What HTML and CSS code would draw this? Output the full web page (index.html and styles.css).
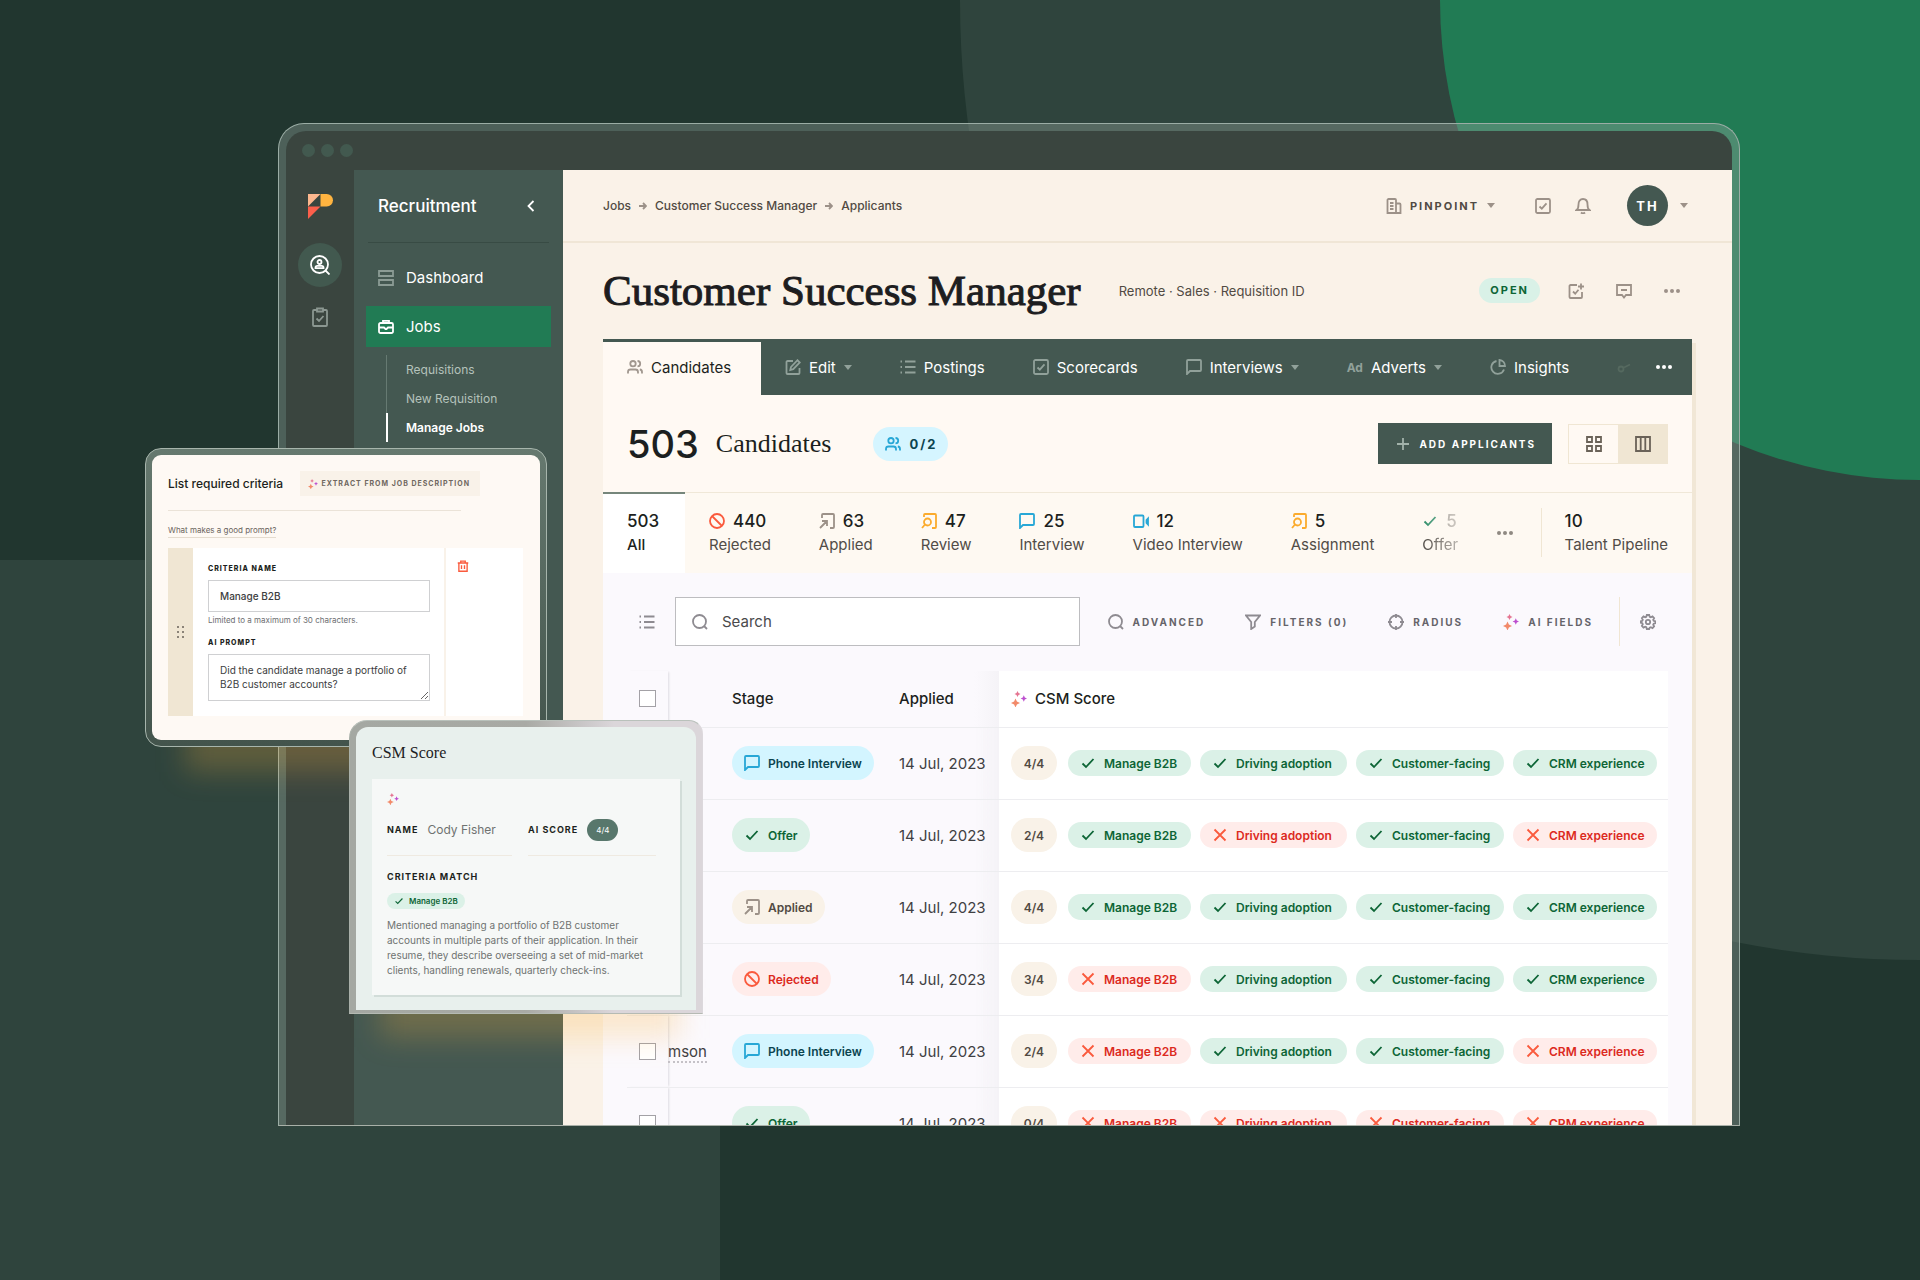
FILE: index.html
```html
<!DOCTYPE html>
<html lang="en">
<head>
<meta charset="utf-8">
<title>Customer Success Manager – Applicants</title>
<link rel="stylesheet" href="styles.css">
</head>
<body>
<svg class="sprite" aria-hidden="true">
  <defs>
    <symbol id="i-users" viewBox="0 0 16 16"><circle cx="6" cy="4.7" r="2.7"/><path d="M1 14.500v-1.500a2.500 2.500 0 0 1 2.500-2.500h5a2.500 2.500 0 0 1 2.500 2.500v1.500M10.500 2a2.700 2.700 0 0 1 0 5.400M12.800 10.500a2.500 2.500 0 0 1 2.200 2.500v1.500"/></symbol>
    <symbol id="i-edit" viewBox="0 0 16 16"><path d="M8 2H2.500a1 1 0 0 0-1 1v11a1 1 0 0 0 1 1h11a1 1 0 0 0 1-1V9M6 8l6.500-6.800 2.300 2.300L8.200 10.200 5.300 11z"/></symbol>
    <symbol id="i-list" viewBox="0 0 16 16"><path d="M5 2.500h10.500M5 8h10.500M5 13.500h10.500M.5 2.500h1.500M.5 8h1.500M.5 13.500h1.500"/></symbol>
    <symbol id="i-check-box" viewBox="0 0 16 16"><rect x="1" y="1" width="14" height="14" rx="1.500"/><path d="m4.500 8.500 2.300 2.200 4.700-5.400"/></symbol>
    <symbol id="i-chat" viewBox="0 0 16 16"><path d="M1 15V2a1 1 0 0 1 1-1h12a1 1 0 0 1 1 1v9a1 1 0 0 1-1 1H4z"/></symbol>
    <symbol id="i-pie" viewBox="0 0 16 16"><path d="M6.500 2A6.500 6.500 0 1 0 14 10.500M9.500 1v6H15A6 6 0 0 0 9.500 1z"/></symbol>
    <symbol id="i-dots" viewBox="0 0 16 16"><g fill="currentColor" stroke="none"><circle cx="2" cy="8" r="2"/><circle cx="8" cy="8" r="2"/><circle cx="14" cy="8" r="2"/></g></symbol>
    <symbol id="i-caret" viewBox="0 0 8 5"><path d="M0 0h8L4 5z" fill="currentColor" stroke="none"/></symbol>
    <symbol id="i-ban" viewBox="0 0 16 16"><circle cx="8" cy="8" r="7"/><path d="m3 3 10 10"/></symbol>
    <symbol id="i-applied" viewBox="0 0 16 16"><path d="M3 5V2a1 1 0 0 1 1-1h10a1 1 0 0 1 1 1v12a1 1 0 0 1-1 1h-3M1 15l7-7M3 8h5v5"/></symbol>
    <symbol id="i-review" viewBox="0 0 16 16"><path d="M3 4V2a1 1 0 0 1 1-1h10a1 1 0 0 1 1 1v12a1 1 0 0 1-1 1h-3"/><circle cx="6.500" cy="9" r="3.500"/><path d="m4 11.500-3 3.500"/></symbol>
    <symbol id="i-video" viewBox="0 0 16 16"><rect x="1" y="2.500" width="9.500" height="11.500" rx="1"/><path d="M13.500 7v3l1.500 1.500V5.500z"/></symbol>
    <symbol id="i-check" viewBox="0 0 16 16"><path d="m2.500 8.500 3.500 3.500 7.500-8"/></symbol>
    <symbol id="i-x" viewBox="0 0 16 16"><path d="m2.500 2.500 11 11M13.500 2.500l-11 11"/></symbol>
    <symbol id="i-search" viewBox="0 0 16 16"><circle cx="7.500" cy="7.500" r="6.500"/><path d="m12 12 3 3"/></symbol>
    <symbol id="i-filter" viewBox="0 0 16 16"><path d="M1 1.500h14L9.800 8v4.500L6.200 15V8z"/></symbol>
    <symbol id="i-radius" viewBox="0 0 16 16"><circle cx="8" cy="8" r="6.500"/><path d="M8 0v4M8 12v4M0 8h4M12 8h4"/></symbol>
    <symbol id="i-spark" viewBox="0 0 16 16"><g stroke="none"><path d="M4.500 7.500 5.900 10.600 9 12 5.900 13.400 4.500 16.500 3.100 13.400 0 12 3.100 10.600z" fill="#f28a6a"/><path d="m6.500 0 1 2 2 1-2 1-1 2-1-2-2-1 2-1z" fill="#e57491"/><path d="m12.800 4.200 1 2.300 2.200 1-2.200 1-1 2.300-1-2.300-2.200-1 2.200-1z" fill="#bd4fcf"/></g></symbol>
    <symbol id="i-gear" viewBox="0 0 16 16"><path d="M6.800 1h2.400l.5 1.800 1.100.5 1.700-.9 1.600 1.700-.9 1.600.5 1.100 1.800.5v1.900l-1.800.5-.5 1.100.9 1.600-1.600 1.700-1.700-.9-1.100.5L9.200 15H6.800l-.5-1.800-1.100-.5-1.700.9-1.600-1.700.9-1.600-.5-1.100L.7 8.700V7.300l1.600-.5.5-1.100-.9-1.600 1.600-1.700 1.700.9 1.100-.5z"/><circle cx="8" cy="8" r="2.200"/></symbol>
    <symbol id="i-building" viewBox="0 0 16 16"><path d="M1.500 15V2a1 1 0 0 1 1-1H9a1 1 0 0 1 1 1v13zM10 5.500h3.500a1 1 0 0 1 1 1V15H10M4 5h3.500M4 8h3.500M4 11h3.500"/></symbol>
    <symbol id="i-bell" viewBox="0 0 16 16"><path d="M1.500 12c1.500-1 2-2 2-5.500C3.500 3.500 5 1 8 1s4.500 2.500 4.500 5.500c0 3.500.5 4.500 2 5.500zM6 14.500c1 1 3 1 4 0"/></symbol>
    <symbol id="i-task-plus" viewBox="0 0 16 16"><path d="M9 2H2.500a1 1 0 0 0-1 1v11a1 1 0 0 0 1 1H13a1 1 0 0 0 1-1V9M13 .5v6M10 3.500h6M5 8.500l2.200 2.200 3.300-4"/></symbol>
    <symbol id="i-comment" viewBox="0 0 16 16"><path d="M1 2h14v10h-5l-2 2.500L6 12H1zM5 7h6"/></symbol>
    <symbol id="i-grid" viewBox="0 0 16 16"><path d="M1 1h5v5H1zM10 1h5v5h-5zM1 10h5v5H1zM10 10h5v5h-5z"/></symbol>
    <symbol id="i-cols" viewBox="0 0 16 16"><path d="M1 1h14v14H1zM5.700 1v14M10.300 1v14"/></symbol>
    <symbol id="i-plus" viewBox="0 0 16 16"><path d="M8 2v12M2 8h12"/></symbol>
    <symbol id="i-chevron" viewBox="0 0 16 16"><path d="M10.500 3 5.500 8l5 5"/></symbol>
    <symbol id="i-dash" viewBox="0 0 16 16"><path d="M1 1h14v5H1zM1 10h14v5H1z"/></symbol>
    <symbol id="i-case" viewBox="0 0 16 16"><path d="M5 4V1.800h6V4M2.500 4h11A1.500 1.500 0 0 1 15 5.500v7a1.500 1.500 0 0 1-1.500 1.500h-11A1.500 1.500 0 0 1 1 12.500v-7A1.500 1.500 0 0 1 2.500 4zM1 8.500h5l1.500 1.500h1L10 8.500h5"/></symbol>
    <symbol id="i-person-search" viewBox="0 0 20 20"><circle cx="9.500" cy="9.500" r="8.500"/><circle cx="9.500" cy="7" r="2"/><path d="M5.500 13.200v-.6c0-1 .8-1.800 1.800-1.800h4.400c1 0 1.800.8 1.800 1.800v.6zM15.500 15.500l4 4"/></symbol>
    <symbol id="i-clipboard" viewBox="0 0 16 20"><path d="M5 3H2a1 1 0 0 0-1 1v14a1 1 0 0 0 1 1h12a1 1 0 0 0 1-1V4a1 1 0 0 0-1-1h-3M5 1.500h6v3H5zM4.500 11.500 7 14l4.500-5"/></symbol>
    <symbol id="i-arrow" viewBox="0 0 8 8"><path d="M0 4h7M4 1l3 3-3 3"/></symbol>
    <symbol id="i-trash" viewBox="0 0 16 16"><path d="M1 4h14M5 4V1.500h6V4M2.500 4v11h11V4M6 7v5M10 7v5"/></symbol>
    <symbol id="i-share" viewBox="0 0 16 16"><circle cx="4" cy="8" r="2.500"/><path d="m7 6.500 6-3"/></symbol>
  </defs>
</svg>

<div class="desktop">
  <div class="shape shape-large"></div>
  <div class="shape shape-green"></div>
  <div class="shape shape-block"></div>

  <div class="window">
    <div class="titlebar"><i></i><i></i><i></i></div>
    <div class="app">
      <nav class="rail" aria-label="Products">
        <svg class="logo" viewBox="0 0 25 25"><path d="M0 0h12.500L0 12.500z" fill="#fdb78e"/><path d="M12.500 0h6.200a6.200 6.200 0 0 1 0 12.500H12.500z" fill="#ffb440"/><path d="M0 12.500h12.500L0 25z" fill="#fb5f4b"/></svg>
        <a href="#" class="rail-active" aria-label="Recruitment"><svg class="icon i20"><use href="#i-person-search"/></svg></a>
        <a href="#" class="rail-item" aria-label="Tasks"><svg class="icon clip"><use href="#i-clipboard"/></svg></a>
      </nav>
      <aside class="sidebar">
        <div class="side-head"><span>Recruitment</span><button aria-label="Collapse"><svg class="icon"><use href="#i-chevron"/></svg></button></div>
        <a href="#" class="side-link"><svg class="icon dim"><use href="#i-dash"/></svg>Dashboard</a>
        <a href="#" class="side-link current"><svg class="icon"><use href="#i-case"/></svg>Jobs</a>
        <div class="subnav">
          <a href="#">Requisitions</a>
          <a href="#">New Requisition</a>
          <a href="#" class="on">Manage Jobs</a>
        </div>
      </aside>
      <main class="main">
        <header class="topbar">
          <nav class="crumbs"><a href="#">Jobs</a><svg class="icon i8"><use href="#i-arrow"/></svg><a href="#">Customer Success Manager</a><svg class="icon i8"><use href="#i-arrow"/></svg><a href="#">Applicants</a></nav>
          <button class="company"><svg class="icon"><use href="#i-building"/></svg>PINPOINT<svg class="caret"><use href="#i-caret"/></svg></button>
          <button class="top-icon" aria-label="Tasks"><svg class="icon"><use href="#i-check-box"/></svg></button>
          <button class="top-icon bell" aria-label="Notifications"><svg class="icon"><use href="#i-bell"/></svg></button>
          <button class="account"><span class="avatar">TH</span><svg class="caret"><use href="#i-caret"/></svg></button>
        </header>
        <div class="title-row">
          <h1>Customer Success Manager</h1>
          <span class="meta">Remote · Sales · Requisition ID</span>
          <span class="open">OPEN</span>
          <button aria-label="Add task"><svg class="icon"><use href="#i-task-plus"/></svg></button>
          <button aria-label="Comments"><svg class="icon"><use href="#i-comment"/></svg></button>
          <button aria-label="More"><svg class="icon"><use href="#i-dots"/></svg></button>
        </div>
        <section class="panel">
          <nav class="tabs">
            <a href="#" class="tab active"><svg class="icon"><use href="#i-users"/></svg>Candidates</a>
            <a href="#" class="tab"><svg class="icon"><use href="#i-edit"/></svg>Edit<svg class="caret"><use href="#i-caret"/></svg></a>
            <a href="#" class="tab"><svg class="icon"><use href="#i-list"/></svg>Postings</a>
            <a href="#" class="tab"><svg class="icon"><use href="#i-check-box"/></svg>Scorecards</a>
            <a href="#" class="tab"><svg class="icon"><use href="#i-chat"/></svg>Interviews<svg class="caret"><use href="#i-caret"/></svg></a>
            <a href="#" class="tab"><b class="ad">Ad</b>Adverts<svg class="caret"><use href="#i-caret"/></svg></a>
            <a href="#" class="tab"><svg class="icon"><use href="#i-pie"/></svg>Insights</a>
            <span class="tab-fade"><svg class="icon"><use href="#i-share"/></svg></span>
            <button class="tab-more" aria-label="More tabs"><svg class="icon"><use href="#i-dots"/></svg></button>
          </nav>
          <div class="count-row">
            <span class="count">503</span>
            <h2>Candidates</h2>
            <span class="viewers"><svg class="icon"><use href="#i-users"/></svg>0/2</span>
            <button class="add"><svg class="icon"><use href="#i-plus"/></svg>ADD APPLICANTS</button>
            <div class="toggle"><button aria-label="Grid view"><svg class="icon"><use href="#i-grid"/></svg></button><button class="on" aria-label="Column view"><svg class="icon"><use href="#i-cols"/></svg></button></div>
          </div>
          <div class="stages">
            <a href="#" class="stage all"><b>503</b><span>All</span></a>
            <a href="#" class="stage"><b><svg class="icon red"><use href="#i-ban"/></svg>440</b><span>Rejected</span></a>
            <a href="#" class="stage"><b><svg class="icon gray"><use href="#i-applied"/></svg>63</b><span>Applied</span></a>
            <a href="#" class="stage"><b><svg class="icon amber"><use href="#i-review"/></svg>47</b><span>Review</span></a>
            <a href="#" class="stage"><b><svg class="icon blue"><use href="#i-chat"/></svg>25</b><span>Interview</span></a>
            <a href="#" class="stage"><b><svg class="icon blue"><use href="#i-video"/></svg>12</b><span>Video Interview</span></a>
            <a href="#" class="stage"><b><svg class="icon amber"><use href="#i-review"/></svg>5</b><span>Assignment</span></a>
            <a href="#" class="stage faded"><b><svg class="icon green"><use href="#i-check"/></svg>5</b><span>Offer</span></a>
            <button class="stage-more" aria-label="More stages"><svg class="icon"><use href="#i-dots"/></svg></button>
            <a href="#" class="stage pipeline"><b>10</b><span>Talent Pipeline</span></a>
          </div>
          <div class="list">
            <div class="toolbar">
              <button class="list-btn" aria-label="List options"><svg class="icon"><use href="#i-list"/></svg></button>
              <label class="search"><svg class="icon"><use href="#i-search"/></svg><input type="text" placeholder="Search" aria-label="Search"></label>
              <button class="tool"><svg class="icon"><use href="#i-search"/></svg>ADVANCED</button>
              <button class="tool"><svg class="icon"><use href="#i-filter"/></svg>FILTERS (0)</button>
              <button class="tool"><svg class="icon"><use href="#i-radius"/></svg>RADIUS</button>
              <button class="tool"><svg class="icon"><use href="#i-spark"/></svg>AI FIELDS</button>
              <button class="settings" aria-label="Settings"><svg class="icon"><use href="#i-gear"/></svg></button>
            </div>
            <table>
              <colgroup><col class="c-check"><col class="c-name"><col class="c-stage"><col class="c-date"><col></colgroup>
              <thead>
                <tr><th class="check"><input type="checkbox" aria-label="Select all"></th><th class="name"></th><th>Stage</th><th class="date">Applied</th><th class="score"><span><svg class="icon"><use href="#i-spark"/></svg>CSM Score</span></th></tr>
              </thead>
              <tbody>
                <tr><td class="check"><input type="checkbox" aria-label="Select row 1"></td><td class="name"></td><td><span class="pill p-blue"><svg class="icon"><use href="#i-chat"/></svg>Phone Interview</span></td><td class="date">14 Jul, 2023</td>
                  <td class="score"><div><span class="num">4/4</span><span class="chip yes"><svg class="icon"><use href="#i-check"/></svg>Manage B2B</span><span class="chip yes"><svg class="icon"><use href="#i-check"/></svg>Driving adoption</span><span class="chip yes"><svg class="icon"><use href="#i-check"/></svg>Customer-facing</span><span class="chip yes"><svg class="icon"><use href="#i-check"/></svg>CRM experience</span></div></td></tr>
                <tr><td class="check"><input type="checkbox" aria-label="Select row 2"></td><td class="name"></td><td><span class="pill p-green"><svg class="icon"><use href="#i-check"/></svg>Offer</span></td><td class="date">14 Jul, 2023</td>
                  <td class="score"><div><span class="num">2/4</span><span class="chip yes"><svg class="icon"><use href="#i-check"/></svg>Manage B2B</span><span class="chip no"><svg class="icon"><use href="#i-x"/></svg>Driving adoption</span><span class="chip yes"><svg class="icon"><use href="#i-check"/></svg>Customer-facing</span><span class="chip no"><svg class="icon"><use href="#i-x"/></svg>CRM experience</span></div></td></tr>
                <tr><td class="check"><input type="checkbox" aria-label="Select row 3"></td><td class="name"></td><td><span class="pill p-tan"><svg class="icon"><use href="#i-applied"/></svg>Applied</span></td><td class="date">14 Jul, 2023</td>
                  <td class="score"><div><span class="num">4/4</span><span class="chip yes"><svg class="icon"><use href="#i-check"/></svg>Manage B2B</span><span class="chip yes"><svg class="icon"><use href="#i-check"/></svg>Driving adoption</span><span class="chip yes"><svg class="icon"><use href="#i-check"/></svg>Customer-facing</span><span class="chip yes"><svg class="icon"><use href="#i-check"/></svg>CRM experience</span></div></td></tr>
                <tr><td class="check"><input type="checkbox" aria-label="Select row 4"></td><td class="name"></td><td><span class="pill p-red"><svg class="icon"><use href="#i-ban"/></svg>Rejected</span></td><td class="date">14 Jul, 2023</td>
                  <td class="score"><div><span class="num">3/4</span><span class="chip no"><svg class="icon"><use href="#i-x"/></svg>Manage B2B</span><span class="chip yes"><svg class="icon"><use href="#i-check"/></svg>Driving adoption</span><span class="chip yes"><svg class="icon"><use href="#i-check"/></svg>Customer-facing</span><span class="chip yes"><svg class="icon"><use href="#i-check"/></svg>CRM experience</span></div></td></tr>
                <tr><td class="check"><input type="checkbox" aria-label="Select row 5"></td><td class="name"><a href="#">mson</a></td><td><span class="pill p-blue"><svg class="icon"><use href="#i-chat"/></svg>Phone Interview</span></td><td class="date">14 Jul, 2023</td>
                  <td class="score"><div><span class="num">2/4</span><span class="chip no"><svg class="icon"><use href="#i-x"/></svg>Manage B2B</span><span class="chip yes"><svg class="icon"><use href="#i-check"/></svg>Driving adoption</span><span class="chip yes"><svg class="icon"><use href="#i-check"/></svg>Customer-facing</span><span class="chip no"><svg class="icon"><use href="#i-x"/></svg>CRM experience</span></div></td></tr>
                <tr><td class="check"><input type="checkbox" aria-label="Select row 6"></td><td class="name"></td><td><span class="pill p-green"><svg class="icon"><use href="#i-check"/></svg>Offer</span></td><td class="date">14 Jul, 2023</td>
                  <td class="score"><div><span class="num">0/4</span><span class="chip no"><svg class="icon"><use href="#i-x"/></svg>Manage B2B</span><span class="chip no"><svg class="icon"><use href="#i-x"/></svg>Driving adoption</span><span class="chip no"><svg class="icon"><use href="#i-x"/></svg>Customer-facing</span><span class="chip no"><svg class="icon"><use href="#i-x"/></svg>CRM experience</span></div></td></tr>
              </tbody>
            </table>
          </div>
        </section>
      </main>
    </div>
  </div>

  <div class="glow glow-criteria"></div>
  <section class="float criteria">
    <div class="float-body">
      <div class="criteria-head"><h3>List required criteria</h3><button class="extract"><svg class="icon i10"><use href="#i-spark"/></svg>EXTRACT FROM JOB DESCRIPTION</button></div>
      <hr>
      <a href="#" class="hint">What makes a good prompt?</a>
      <div class="criteria-card">
        <div class="handle"><i></i><i></i><i></i><i></i><i></i><i></i></div>
        <div class="fields">
          <label for="cname">CRITERIA NAME</label>
          <input id="cname" type="text" value="Manage B2B">
          <p>Limited to a maximum of 30 characters.</p>
          <label for="cprompt">AI PROMPT</label>
          <textarea id="cprompt" rows="2">Did the candidate manage a portfolio of B2B customer accounts?</textarea>
        </div>
        <div class="side"><button aria-label="Delete"><svg class="icon i12"><use href="#i-trash"/></svg></button></div>
      </div>
    </div>
  </section>

  <div class="glow glow-score"></div>
  <section class="float scorecard">
    <div class="float-body">
      <h3>CSM Score</h3>
      <div class="sheet">
        <svg class="icon i12"><use href="#i-spark"/></svg>
        <div class="pairs">
          <div><b>NAME</b><span>Cody Fisher</span></div>
          <div><b>AI SCORE</b><em>4/4</em></div>
        </div>
        <b class="match">CRITERIA MATCH</b>
        <span class="mini"><svg class="icon i10"><use href="#i-check"/></svg>Manage B2B</span>
        <p>Mentioned managing a portfolio of B2B customer<br>accounts in multiple parts of their application. In their<br>resume, they describe overseeing a set of mid-market<br>clients, handling renewals, quarterly check-ins.</p>
      </div>
    </div>
  </section>
</div>
</body>
</html>
```
FILE: styles.css
```css
* { box-sizing: border-box; }
body {
  margin: 0;
  font-family: Inter, "Liberation Sans", sans-serif;
  font-size: 16px;
  color: #1c1f20;
}
a { color: inherit; text-decoration: none; }
button {
  display: flex;
  align-items: center;
  padding: 0;
  border: 0;
  background: none;
  color: inherit;
  font: inherit;
}
h1, h2, h3, p { margin: 0; }
.sprite { position: absolute; width: 0; height: 0; }
.icon {
  flex: none;
  width: 16px;
  height: 16px;
  fill: none;
  stroke: currentColor;
  stroke-width: 1.8;
  overflow: visible;
}
.i8 { width: 8px; height: 8px; }
.i10 { width: 10px; height: 10px; }
.i12 { width: 12px; height: 12px; }
.i20 { width: 20px; height: 20px; }
.caret { flex: none; width: 8px; height: 5px; }

/* Backdrop */
.desktop {
  position: relative;
  min-height: 100vh;
  padding: 123px 180px 0 278px;
  overflow: hidden;
  background: #21362f;
}
.shape { position: absolute; }
.shape-large { top: -960px; right: -960px; width: 1920px; height: 1920px; border-radius: 50%; background: #2f443d; }
.shape-green { top: -480px; right: -480px; width: 960px; height: 960px; border-radius: 50%; background: #217b54; }
.shape-block { left: 0; top: 560px; bottom: 0; width: 720px; background: #2f443d; }

/* Browser window */
.window {
  position: relative;
  display: flex;
  flex-direction: column;
  height: calc(100vh - 277px);
  min-height: 1003px;
  padding: 7px 7px 0;
  border: 1px solid #9bada5;
  border-bottom-color: #a9b0a8;
  border-radius: 26px 26px 0 0;
  background: rgba(150, 165, 158, .38);
  overflow: hidden;
}
.titlebar {
  display: flex;
  flex: none;
  gap: 6px;
  height: 39px;
  padding: 13px 16px;
  border-radius: 20px 20px 0 0;
  background: #3a453f;
}
.titlebar i { width: 13px; height: 13px; border-radius: 50%; background: #42594f; }
.app { display: flex; flex: 1; min-height: 0; overflow: hidden; }
.rail {
  display: flex;
  flex: none;
  flex-direction: column;
  align-items: center;
  width: 68px;
  padding-top: 24px;
  background: #3a453f;
  color: #8b9791;
}
.logo { width: 25px; height: 25px; }
.rail-active {
  display: grid;
  place-items: center;
  width: 44px;
  height: 44px;
  margin: 24px 0 20px;
  border-radius: 50%;
  background: #42594f;
  color: #fff;
}
.clip { height: 20px; }

.sidebar { flex: none; width: 209px; padding: 0 12px; background: #445851; color: #fff; }
.side-head {
  display: flex;
  align-items: center;
  justify-content: space-between;
  height: 73px;
  margin: 0 2px 14px;
  padding: 0 10px;
  border-bottom: 1px solid #384b44;
  font-size: 17px;
  font-weight: 500;
}
.side-link { display: flex; align-items: center; gap: 12px; height: 41px; margin-bottom: 8px; padding: 0 12px; font-size: 15px; }
.subnav { margin-left: 20px; border-left: 1px solid #667a72; font-size: 12px; }
.current { background: #217b54; }
.dim { color: #8b9b94; }
.subnav a { display: flex; align-items: center; height: 29px; padding-left: 19px; color: #b4c2bb; }
.subnav .on { margin-left: -1px; padding-left: 18px; border-left: 2px solid #fff; color: #fff; font-weight: 600; }

/* Main column */
.main { flex: 1; min-width: 0; background: #faf2e8; }
.topbar {
  display: flex;
  align-items: center;
  height: 73px;
  padding: 0 44px 0 40px;
  border-bottom: 2px solid #f0e6d6;
  color: #9c9188;
}
.crumbs { display: flex; align-items: center; gap: 8px; flex: 1; font-size: 12px; font-weight: 500; }
.crumbs a { color: #514a43; }
.company { gap: 8px; margin-right: 40px; color: #514a43; font-size: 11px; font-weight: 700; letter-spacing: 2px; }
.company .icon, .company .caret { color: #9c9188; }
.bell { margin: 0 36px 0 24px; }
.account { gap: 12px; }
.avatar {
  display: grid;
  place-items: center;
  width: 41px;
  height: 41px;
  border-radius: 50%;
  background: #445851;
  color: #fff;
  font-size: 13px;
  font-weight: 700;
  letter-spacing: 2px;
}
.title-row { display: flex; align-items: center; height: 95px; margin-bottom: 1px; padding: 0 52px 0 40px; color: #9c9188; }
.title-row h1 {
  margin-right: 38px;
  color: #1d1d1f;
  font: 400 43px/56px "Liberation Serif", serif;
  -webkit-text-stroke: 1px #1d1d1f;
  white-space: nowrap;
}
.meta { flex: 1; color: #514a43; font-size: 13px; white-space: nowrap; }
.open { padding: 5px 11px; border-radius: 13px; background: #d9f1e7; color: #0d6536; font-size: 11px; font-weight: 700; line-height: 15px; letter-spacing: 2px; }
.title-row button { margin-left: 32px; }
.open + button { margin-left: 28px; }

.panel { margin: 0 40px; background: #fff9f3; box-shadow: 4px 4px 0 #f1e7d6; }
.tabs { display: flex; height: 56px; border-top: 3px solid #445851; background: #445851; color: #fff; font-size: 15px; }
.tab { display: flex; align-items: center; gap: 8px; padding: 0 24px 3px; }
.tab .icon, .tab .caret, .ad { color: #91a19a; }
.tab.active { min-width: 158px; background: #fff9f3; color: #1c1f20; }
.tab.active .icon { color: #a1978f; }
.ad { font-size: 12px; }
.tab-fade { display: flex; align-items: center; margin-left: 24px; color: #55695f; }
.tab-more { margin-left: auto; padding: 0 20px 3px 0; }

.count-row { display: flex; align-items: center; height: 98px; padding: 0 24px; border-bottom: 1px solid #f0e8d8; }
.count { margin-right: 17px; font-size: 38px; font-weight: 500; }
.count-row h2 { margin-right: 42px; font: 400 26px/32px "Liberation Serif", serif; }
.viewers { display: flex; align-items: center; gap: 8px; height: 34px; padding: 0 11px 0 12px; border-radius: 17px; background: #d5f5ff; color: #0b4450; font-size: 13px; font-weight: 700; letter-spacing: 2px; }
.viewers .icon { color: #27a7d6; }
.add { gap: 8px; height: 41px; margin-left: auto; padding: 0 16px 0 17px; background: #445851; color: #fff; font-size: 10px; font-weight: 700; letter-spacing: 2px; white-space: nowrap; }
.add .icon { color: #a2b2aa; }
.toggle { display: flex; margin-left: 16px; border: 1px solid #f0e6d3; color: #6a6258; }
.toggle button { justify-content: center; width: 49px; height: 38px; }
.toggle .on { background: #f0e6d3; }

.stages { display: flex; height: 80px; background: #fef9f2; }
.stage { padding: 16px 24px 0; color: #514c47; font-size: 15px; line-height: 24px; white-space: nowrap; }
.stage b { display: flex; align-items: center; gap: 8px; height: 24px; color: #1c1f20; font-size: 17px; font-weight: 500; }
.stage span { display: block; }
.stage.all { min-width: 82px; margin-top: -1px; padding-right: 22px; padding-top: 15px; border-top: 2px solid #76867b; background: #fff; color: #1c1f20; font-weight: 500; }
.faded { padding-right: 0; -webkit-mask-image: linear-gradient(90deg, #000 40%, rgba(0, 0, 0, .4)); mask-image: linear-gradient(90deg, #000 40%, rgba(0, 0, 0, .4)); }
.faded b { color: #8b8680; }
.stage-more { margin-left: auto; padding-right: 28px; color: #8f8982; }
.pipeline { position: relative; }
.pipeline::before { content: ""; position: absolute; left: 0; top: 15px; height: 49px; border-left: 1px solid #f0e6d3; }
.red { color: #fa5a3d; }
.gray { color: #9c9188; }
.amber { color: #fbab2d; }
.blue { color: #27a7d6; }
.green { color: #2a8a66; }

.list { padding: 24px 24px 0; background: #fbf9fd; }
.toolbar { display: flex; align-items: center; gap: 40px; height: 49px; margin-bottom: 25px; padding-left: 12px; color: #8e8b91; }
.list-btn { margin-right: -20px; }
.search { display: flex; flex: 1; align-items: center; gap: 14px; height: 49px; margin-right: -12px; padding-left: 16px; border: 1px solid #bdbdc0; background: #fff; }
.search input { width: 100%; min-width: 0; padding: 0; border: 0; outline: 0; background: none; color: #4a4a4c; font: inherit; font-size: 15px; }
.search input::placeholder { color: #4a4a4c; opacity: 1; }
.tool { gap: 9px; color: #66646a; font-size: 10px; font-weight: 700; letter-spacing: 2px; white-space: nowrap; }
.tool .icon { color: #8e8b91; }
.settings { height: 49px; margin-left: -14px; padding: 0 12px 0 20px; border-left: 1px solid #f0e6d3; }

table { width: 100%; border-collapse: collapse; table-layout: fixed; }
.c-check { width: 41px; }
.c-name { width: 40px; }
.c-stage { width: 167px; }
.c-date { width: 124px; }
th { height: 56px; padding: 0 0 0 24px; font-size: 15px; font-weight: 500; text-align: left; }
td { height: 72px; padding: 0 0 0 24px; color: #3f4043; white-space: nowrap; }
th, td { border-bottom: 1px solid #ededf0; }
th.check, td.check { padding: 0 0 0 12px; box-shadow: 2px 0 2px -1px #dedce2; }
th.name, td.name { padding: 0; font-size: 15px; }
.name a { border-bottom: 2px dotted #c5c2c8; }
th.date, td.date { font-size: 15px; background: linear-gradient(90deg, rgba(240, 239, 242, 0) 80%, #f5f3f7); }
th.score, td.score { padding: 0 0 0 12px; background: #fff; }
th.score span { display: flex; align-items: center; gap: 8px; }
td.score div { display: grid; grid-template-columns: 48px 123px 147px 148px 144px; align-items: center; gap: 9px; }
input[type="checkbox"] { display: block; width: 17px; height: 17px; margin: 0; appearance: none; border: 1px solid #a3a1a6; background: #fff; }
.pill { display: inline-flex; align-items: center; gap: 8px; height: 34px; padding: 0 12px; border-radius: 17px; font-size: 12px; font-weight: 600; vertical-align: middle; }
.p-blue { background: #d3f5ff; color: #0b4450; }
.p-blue .icon { color: #27a7d6; }
.p-green { background: #dbf1e7; color: #0d6536; }
.p-tan { background: #f9f2e8; color: #514a43; }
.p-tan .icon { color: #9c9188; }
.p-red { background: #ffecea; color: #dc2a1e; }
.p-red .icon { color: #fa5a3d; }
.num { display: grid; place-items: center; width: 46px; height: 34px; border-radius: 17px; background: #f9f2e8; color: #514a43; font-size: 12px; font-weight: 600; }
.chip { display: flex; align-items: center; gap: 8px; height: 26px; padding: 0 12px; border-radius: 13px; font-size: 12px; font-weight: 600; }
.yes { background: #dbf1e7; color: #0d6536; }
.no { background: #ffecea; color: #dc2a1e; }
.no .icon { color: #fa5a3d; }

/* Floating cards */
.glow { position: absolute; height: 50px; background: rgba(250, 176, 60, .24); filter: blur(14px); }
.glow-criteria { left: 185px; top: 722px; width: 320px; }
.glow-score { left: 380px; top: 988px; width: 300px; }
.float { position: absolute; padding: 6px; border: 1px solid #a7b5ac; }
.float h3 { font-weight: 500; }
.criteria { left: 145px; top: 448px; width: 402px; height: 299px; border-radius: 16px; background: linear-gradient(#66796f, #43544c); }
.criteria .float-body { height: 285px; padding: 16px 17px 0 16px; border-radius: 9px; background: #fef9f4; }
.criteria-head { display: flex; align-items: center; justify-content: space-between; height: 25px; padding-right: 43px; white-space: nowrap; }
.criteria h3 { font-size: 12px; }
.extract { gap: 4px; height: 25px; padding: 0 10px 0 8px; background: #f9f2e9; color: #6f675f; font-size: 7px; font-weight: 700; letter-spacing: 1px; }
.criteria hr { height: 1px; margin: 14px 62px 12px 0; border: 0; background: #ebe3d8; }
.hint { display: block; width: fit-content; border-bottom: 1px solid #e5dccf; color: #6b645d; font-size: 8px; line-height: 14px; }
.criteria-card { display: flex; height: 168px; margin-top: 10px; background: #fff; }
.handle { display: grid; grid-template-columns: 2px 2px; gap: 3px; align-content: center; justify-content: center; width: 25px; background: #f0e6d3; }
.handle i { width: 2px; height: 2px; background: #8b8378; }
.fields { flex: none; width: 251px; padding: 15px 14px 0 15px; }
.fields label { display: block; margin-bottom: 6px; font-size: 7px; font-weight: 800; line-height: 11px; letter-spacing: 1px; }
.fields input, .fields textarea { display: block; width: 222px; border: 1px solid #cfd0d2; outline: 0; background: #fff; color: #3c3d40; font: 10px/14px Inter, "Liberation Sans", sans-serif; }
.fields input { height: 32px; padding: 0 11px; font-weight: 500; }
.fields textarea { height: 47px; padding: 8px 11px; resize: both; overflow: hidden; }
.fields p { margin: 2px 0 10px; color: #6d6e71; font-size: 8px; line-height: 13px; }
.side { flex: 1; padding: 12px 0 0 11px; border-left: 2px solid #f9f2e9; color: #fa5a3d; }

.scorecard {
  left: 349px;
  top: 720px;
  width: 354px;
  height: 294px;
  border-color: #b9c1bb #dcd8dc #b5bab3 #a9b0a9;
  border-radius: 18px 14px 0 0;
  background: linear-gradient(90deg, #a4a8a2, #a9aaa5 50%, #dbd6da 75%);
}
.scorecard .float-body { height: 283px; padding: 14px 16px 0; border-radius: 12px 12px 0 0; background: #e8f0ed; }
.scorecard h3 { margin-bottom: 14px; color: #1d1d1f; font: 400 16px/24px "Liberation Serif", serif; }
.sheet { height: 216px; padding: 14px 15px 0; background: #f6f8f7; box-shadow: 2px 2px 0 #d2ddd9; }
.sheet > .icon { display: block; }
.sheet b { font-size: 9px; font-weight: 700; line-height: 12px; letter-spacing: 1px; }
.pairs { display: grid; grid-template-columns: 125px 128px; gap: 16px; margin: 10px 0 15px; }
.pairs div { display: flex; align-items: center; gap: 9px; height: 41px; padding-bottom: 11px; border-bottom: 1px solid #efeae1; white-space: nowrap; }
.pairs span { color: #6f7371; font-size: 12px; }
.pairs em { padding: 0 9px; border-radius: 11px; background: #58776c; color: #fff; font-size: 8px; font-style: normal; line-height: 22px; }
.match { display: block; }
.mini { display: flex; align-items: center; gap: 5px; width: fit-content; height: 16px; margin: 10px 0 9px; padding: 0 7px; border-radius: 8px; background: #dbf1e7; color: #0d6536; font-size: 8px; font-weight: 600; }
.sheet p { color: #6f7371; font-size: 10px; line-height: 15px; white-space: nowrap; }
```
